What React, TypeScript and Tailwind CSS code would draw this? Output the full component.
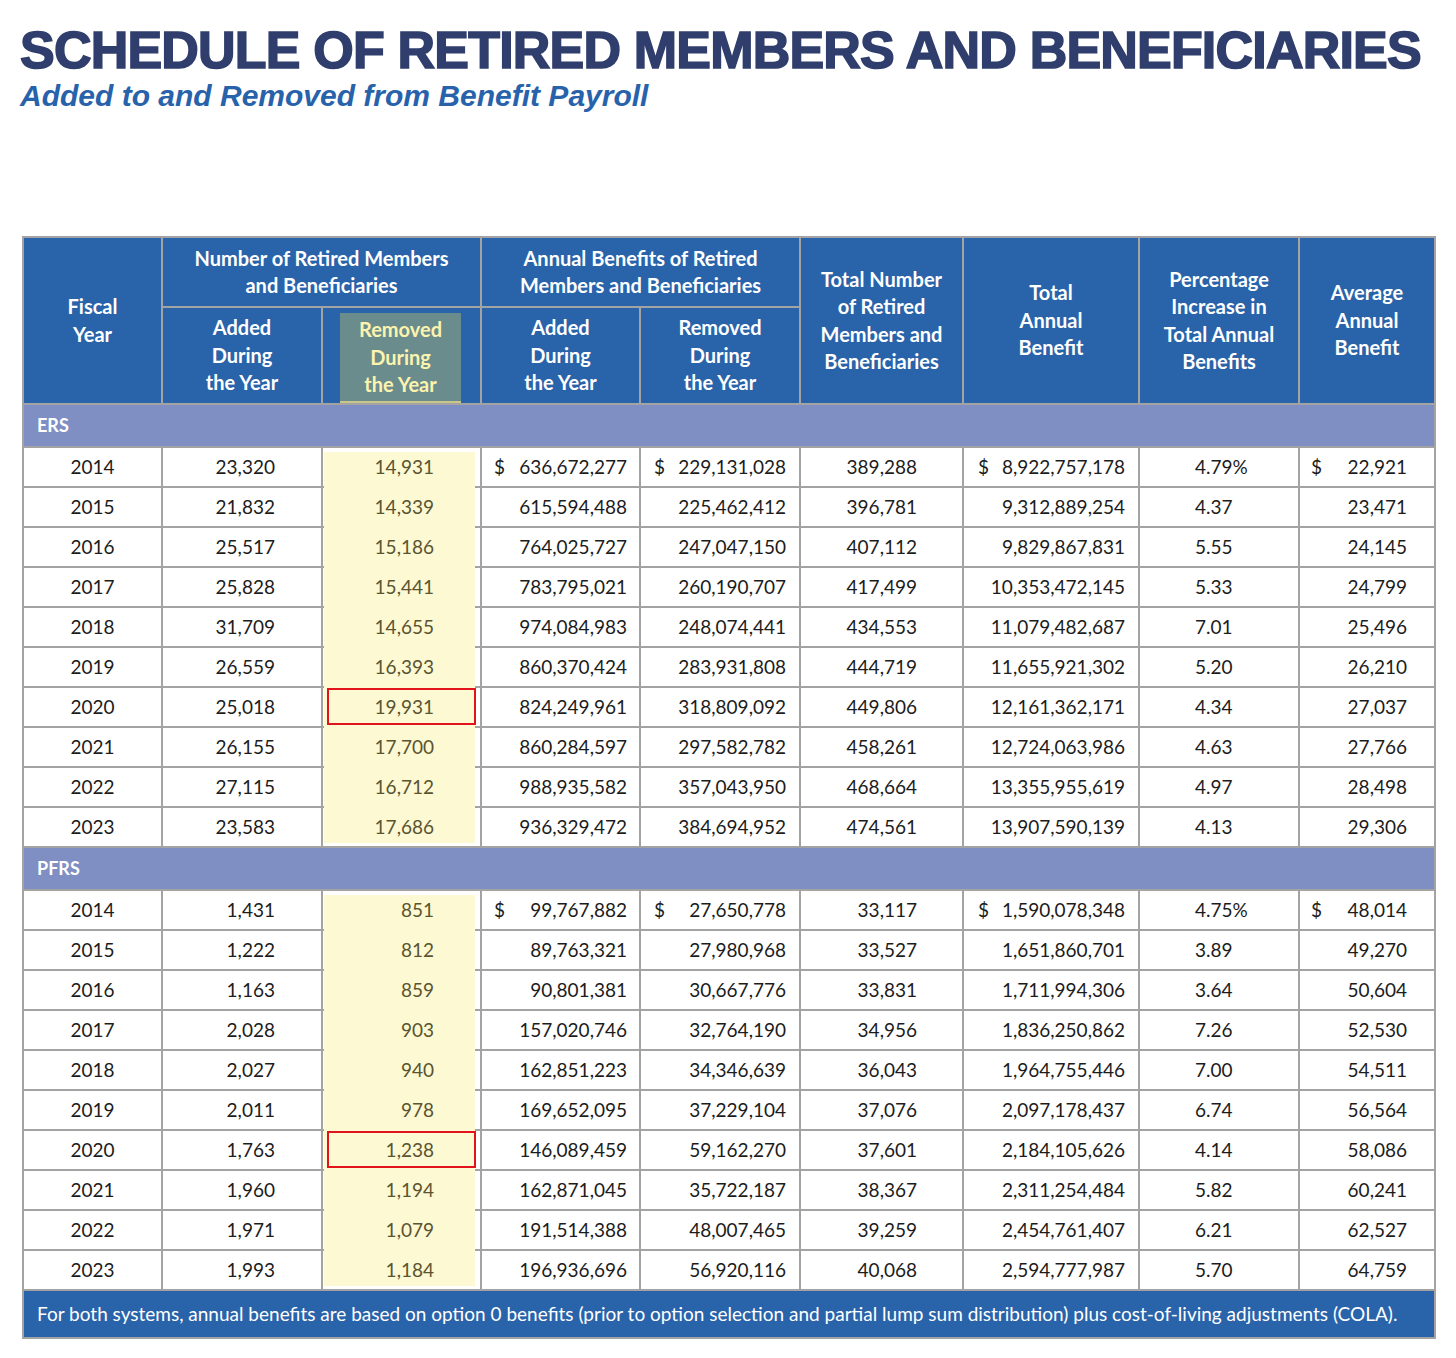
const ers = [
  ['2014', '23,320', '14,931', '636,672,277', '229,131,028', '389,288', '8,922,757,178', '4.79%', '22,921'],
  ['2015', '21,832', '14,339', '615,594,488', '225,462,412', '396,781', '9,312,889,254', '4.37', '23,471'],
  ['2016', '25,517', '15,186', '764,025,727', '247,047,150', '407,112', '9,829,867,831', '5.55', '24,145'],
  ['2017', '25,828', '15,441', '783,795,021', '260,190,707', '417,499', '10,353,472,145', '5.33', '24,799'],
  ['2018', '31,709', '14,655', '974,084,983', '248,074,441', '434,553', '11,079,482,687', '7.01', '25,496'],
  ['2019', '26,559', '16,393', '860,370,424', '283,931,808', '444,719', '11,655,921,302', '5.20', '26,210'],
  ['2020', '25,018', '19,931', '824,249,961', '318,809,092', '449,806', '12,161,362,171', '4.34', '27,037'],
  ['2021', '26,155', '17,700', '860,284,597', '297,582,782', '458,261', '12,724,063,986', '4.63', '27,766'],
  ['2022', '27,115', '16,712', '988,935,582', '357,043,950', '468,664', '13,355,955,619', '4.97', '28,498'],
  ['2023', '23,583', '17,686', '936,329,472', '384,694,952', '474,561', '13,907,590,139', '4.13', '29,306'],
]

const pfrs = [
  ['2014', '1,431', '851', '99,767,882', '27,650,778', '33,117', '1,590,078,348', '4.75%', '48,014'],
  ['2015', '1,222', '812', '89,763,321', '27,980,968', '33,527', '1,651,860,701', '3.89', '49,270'],
  ['2016', '1,163', '859', '90,801,381', '30,667,776', '33,831', '1,711,994,306', '3.64', '50,604'],
  ['2017', '2,028', '903', '157,020,746', '32,764,190', '34,956', '1,836,250,862', '7.26', '52,530'],
  ['2018', '2,027', '940', '162,851,223', '34,346,639', '36,043', '1,964,755,446', '7.00', '54,511'],
  ['2019', '2,011', '978', '169,652,095', '37,229,104', '37,076', '2,097,178,437', '6.74', '56,564'],
  ['2020', '1,763', '1,238', '146,089,459', '59,162,270', '37,601', '2,184,105,626', '4.14', '58,086'],
  ['2021', '1,960', '1,194', '162,871,045', '35,722,187', '38,367', '2,311,254,484', '5.82', '60,241'],
  ['2022', '1,971', '1,079', '191,514,388', '48,007,465', '39,259', '2,454,761,407', '6.21', '62,527'],
  ['2023', '1,993', '1,184', '196,936,696', '56,920,116', '40,068', '2,594,777,987', '5.70', '64,759'],
]

const cell = 'border-2 border-[#a3a3a3] p-0 align-middle'
const head = 'border-2 border-[#a3a3a3] bg-[#2963aa] text-white font-bold text-[20px] leading-[27.5px] text-center align-middle'

function Money({ value, dollar, pad }: { value: string; dollar: boolean; pad: string }) {
  return (
    <div className={`flex items-center justify-between ${pad}`}>
      <span>{dollar ? '$' : ''}</span>
      <span>{value}</span>
    </div>
  )
}

function Section({ name, rows }: { name: string; rows: string[][] }) {
  return (
    <>
      <tr className="h-[43px] bg-[#7f8fc4]">
        <td colSpan={9} className="border-2 border-[#a3a3a3] px-[13px] text-left text-[18px] font-bold text-white">
          {name}
        </td>
      </tr>
      {rows.map((r, i) => {
        const first = i === 0
        const last = i === rows.length - 1
        return (
          <tr key={r[0]} className="h-[40px] text-[19px] text-[#1c1c1c]">
            <td className={`${cell} text-center`}>{r[0]}</td>
            <td className={`${cell} pr-[46px] text-right`}>{r[1]}</td>
            <td className={`${cell} relative`}>
              <div
                className={`absolute left-[1px] right-[5px] bg-[#fdf9d3] ${first ? 'top-[4px]' : 'top-[-2px]'} ${
                  last ? 'bottom-[3px]' : 'bottom-[-2px]'
                }`}
              />
              {r[0] === '2020' && (
                <div className="absolute inset-x-[4px] top-[0px] bottom-[1px] border-2 border-[#e3131b]" />
              )}
              <div className="relative pr-[46px] text-right text-[#5a5431]">{r[2]}</div>
            </td>
            <td className={cell}>
              <Money value={r[3]} dollar={first} pad="px-[12px]" />
            </td>
            <td className={cell}>
              <Money value={r[4]} dollar={first} pad="px-[13px]" />
            </td>
            <td className={`${cell} pr-[45px] text-right`}>{r[5]}</td>
            <td className={cell}>
              <Money value={r[6]} dollar={first} pad="pl-[14px] pr-[13px]" />
            </td>
            <td className={`${cell} pl-[55px] text-left`}>{r[7]}</td>
            <td className={cell}>
              <Money value={r[8]} dollar={first} pad="pl-[11px] pr-[27px]" />
            </td>
          </tr>
        )
      })}
    </>
  )
}

export default function App() {
  return (
    <div className="min-h-[1358px] w-[1456px] bg-white pt-[22px]" style={{ fontFamily: 'Lato, "Open Sans", sans-serif' }}>
      <div className="pl-[20px]" style={{ fontFamily: '"Liberation Sans", Arial, sans-serif' }}>
        <h1 className="whitespace-nowrap text-[52px] font-black leading-[56px] tracking-[-0.8px] text-[#2f3e6c] [-webkit-text-stroke:1.6px_#2f3e6c]">
          SCHEDULE OF RETIRED MEMBERS AND BENEFICIARIES
        </h1>
        <p className="mt-[1px] whitespace-nowrap text-[30px] font-bold italic leading-[34px] text-[#2762ab]">
          Added to and Removed from Benefit Payroll
        </p>
      </div>

      <table className="ml-[22px] mt-[123px] w-[1412px] table-fixed border-collapse">
        <colgroup>
          <col className="w-[139px]" />
          <col className="w-[160px]" />
          <col className="w-[159px]" />
          <col className="w-[159px]" />
          <col className="w-[160px]" />
          <col className="w-[163px]" />
          <col className="w-[176px]" />
          <col className="w-[160px]" />
          <col className="w-[136px]" />
        </colgroup>
        <thead>
          <tr className="h-[70px]">
            <th rowSpan={2} className={head}>
              Fiscal
              <br />
              Year
            </th>
            <th colSpan={2} className={head}>
              Number of Retired Members
              <br />
              and Beneficiaries
            </th>
            <th colSpan={2} className={head}>
              Annual Benefits of Retired
              <br />
              Members and Beneficiaries
            </th>
            <th rowSpan={2} className={head}>
              Total Number
              <br />
              of Retired
              <br />
              Members and
              <br />
              Beneficiaries
            </th>
            <th rowSpan={2} className={head}>
              Total
              <br />
              Annual
              <br />
              Benefit
            </th>
            <th rowSpan={2} className={head}>
              Percentage
              <br />
              Increase in
              <br />
              Total Annual
              <br />
              Benefits
            </th>
            <th rowSpan={2} className={head}>
              Average
              <br />
              Annual
              <br />
              Benefit
            </th>
          </tr>
          <tr className="h-[97px]">
            <th className={head}>
              Added
              <br />
              During
              <br />
              the Year
            </th>
            <th className={`${head} p-0`}>
              <div className="ml-[17px] mr-[19px] mt-[5px] h-[90px] border-b-2 border-[#c9c68c] bg-[#6a8c8c] pt-[3px] text-[#fcf3ae]">
                Removed
                <br />
                During
                <br />
                the Year
              </div>
            </th>
            <th className={head}>
              Added
              <br />
              During
              <br />
              the Year
            </th>
            <th className={head}>
              Removed
              <br />
              During
              <br />
              the Year
            </th>
          </tr>
        </thead>
        <tbody>
          <Section name="ERS" rows={ers} />
          <Section name="PFRS" rows={pfrs} />
          <tr className="h-[48px] bg-[#2963aa]">
            <td colSpan={9} className="whitespace-nowrap border-2 border-[#a3a3a3] px-[13px] text-left text-[19px] text-white">
              For both systems, annual benefits are based on option 0 benefits (prior to option selection and partial lump sum
              distribution) plus cost-of-living adjustments (COLA).
            </td>
          </tr>
        </tbody>
      </table>
    </div>
  )
}
